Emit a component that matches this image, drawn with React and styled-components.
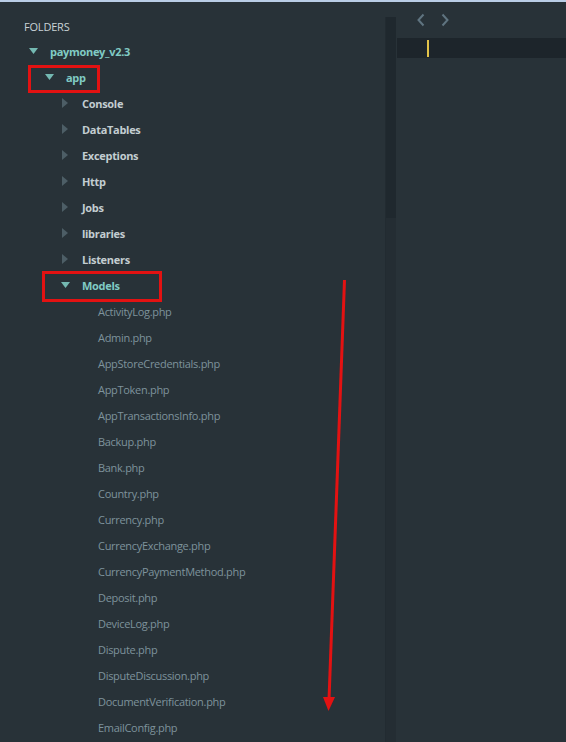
import React from "react";
import styled, { createGlobalStyle } from "styled-components";

const GlobalStyle = createGlobalStyle`
  html, body {
    margin: 0;
    padding: 0;
    background: #283238;
  }
  body {
    font-family: "Open Sans", "Noto Sans", sans-serif;
  }
`;

const tree = [
  {
    name: "paymoney_v2.3",
    open: true,
    children: [
      {
        name: "app",
        open: true,
        children: [
          { name: "Console", dir: true },
          { name: "DataTables", dir: true },
          { name: "Exceptions", dir: true },
          { name: "Http", dir: true },
          { name: "Jobs", dir: true },
          { name: "libraries", dir: true },
          { name: "Listeners", dir: true },
          {
            name: "Models",
            open: true,
            children: [
              "ActivityLog.php",
              "Admin.php",
              "AppStoreCredentials.php",
              "AppToken.php",
              "AppTransactionsInfo.php",
              "Backup.php",
              "Bank.php",
              "Country.php",
              "Currency.php",
              "CurrencyExchange.php",
              "CurrencyPaymentMethod.php",
              "Deposit.php",
              "DeviceLog.php",
              "Dispute.php",
              "DisputeDiscussion.php",
              "DocumentVerification.php",
              "EmailConfig.php",
            ].map((name) => ({ name })),
          },
        ],
      },
    ],
  },
];

const Window = styled.div`
  width: 566px;
  height: 742px;
  overflow: hidden;
  position: relative;
  display: flex;
  flex-direction: column;
  background: #283238;
`;

const TopStrip = styled.div`
  height: 2px;
  background: #b9cde6;
  flex-shrink: 0;
`;

const Main = styled.div`
  flex: 1;
  display: flex;
  min-height: 0;
`;

const Sidebar = styled.div`
  width: 385px;
  padding-top: 13px;
  display: flex;
  flex-direction: column;
  overflow: hidden;
`;

const Header = styled.div`
  height: 23px;
  display: flex;
  align-items: center;
  padding-left: 24px;
  font-size: 11px;
  letter-spacing: -0.2px;
  color: #c9d2d6;
`;

const Row = styled.div`
  height: 26px;
  flex-shrink: 0;
  display: flex;
  align-items: center;
  padding-left: ${({ depth }) => 28 + depth * 16}px;
`;

const Label = styled.span`
  display: inline-flex;
  align-items: center;
  height: 26px;
  font-size: 11px;
  letter-spacing: -0.3px;
  font-weight: ${({ dir }) => (dir ? 700 : 400)};
  color: ${({ open, dir }) => (open ? "#80cbc4" : dir ? "#c3cdd1" : "#7e939c")};
  white-space: nowrap;
`;

const ArrowBox = styled.span`
  width: 10px;
  margin-right: 12px;
  display: inline-flex;
  justify-content: center;
  align-items: center;
`;

const ScrollTrack = styled.div`
  width: 10px;
  margin-top: 15px;
  background: #242d33;
  border-left: 1px solid #222b31;
  display: flex;
  flex-direction: column;
`;

const ScrollThumb = styled.div`
  height: 201px;
  background: #1f282e;
`;

const Editor = styled.div`
  flex: 1;
  margin-left: 1px;
  display: flex;
  flex-direction: column;
`;

const NavBar = styled.div`
  height: 36px;
  display: flex;
  align-items: center;
  gap: 16px;
  padding-left: 20px;
`;

const CurrentLine = styled.div`
  height: 20px;
  background: #1d252b;
  display: flex;
  align-items: center;
  padding-left: 30px;
`;

const Caret = styled.div`
  width: 2px;
  height: 17px;
  background: #e2c349;
`;

const Overlay = styled.svg`
  position: absolute;
  left: 0;
  top: 0;
  pointer-events: none;
`;

const Arrow = ({ open }) =>
  open ? (
    <svg width="9" height="6" viewBox="0 0 9 6">
      <path d="M0 0 H9 L4.5 6 Z" fill="#74b9b2" />
    </svg>
  ) : (
    <svg width="6" height="10" viewBox="0 0 6 10">
      <path d="M0 0 L6 5 L0 10 Z" fill="#4d5e66" />
    </svg>
  );

const flatten = (nodes, depth = 0, out = []) => {
  nodes.forEach((node) => {
    const dir = node.dir || !!node.children;
    out.push({ ...node, dir, depth });
    if (node.open && node.children) flatten(node.children, depth + 1, out);
  });
  return out;
};

const Chevron = ({ flip }) => (
  <svg width="8" height="14" viewBox="0 0 8 14">
    <path
      d={flip ? "M1.5 1.5 L6.5 7 L1.5 12.5" : "M6.5 1.5 L1.5 7 L6.5 12.5"}
      fill="none"
      stroke="#5f7480"
      strokeWidth="2"
    />
  </svg>
);

export default function App() {
  const rows = flatten(tree);

  return (
    <>
      <GlobalStyle />
      <Window>
        <TopStrip />
        <Main>
          <Sidebar>
            <Header>FOLDERS</Header>
            {rows.map((row, i) => (
              <Row key={i} depth={row.depth}>
                <ArrowBox>{row.dir && <Arrow open={row.open} />}</ArrowBox>
                <Label dir={row.dir ? 1 : 0} open={row.open}>
                  {row.name}
                </Label>
              </Row>
            ))}
          </Sidebar>
          <ScrollTrack>
            <ScrollThumb />
          </ScrollTrack>
          <Editor>
            <NavBar>
              <Chevron />
              <Chevron flip />
            </NavBar>
            <CurrentLine>
              <Caret />
            </CurrentLine>
          </Editor>
        </Main>
        <Overlay width="566" height="742" viewBox="0 0 566 742">
          <rect x="29.5" y="66.5" width="69" height="25" fill="none" stroke="#e31212" strokeWidth="3" />
          <rect x="43.5" y="272.5" width="117" height="28" fill="none" stroke="#e31212" strokeWidth="3" />
          <line x1="344.5" y1="280" x2="329" y2="700" stroke="#e31212" strokeWidth="3" />
          <path d="M323 697 L335 697 L328.5 711 Z" fill="#e31212" />
        </Overlay>
      </Window>
    </>
  );
}
